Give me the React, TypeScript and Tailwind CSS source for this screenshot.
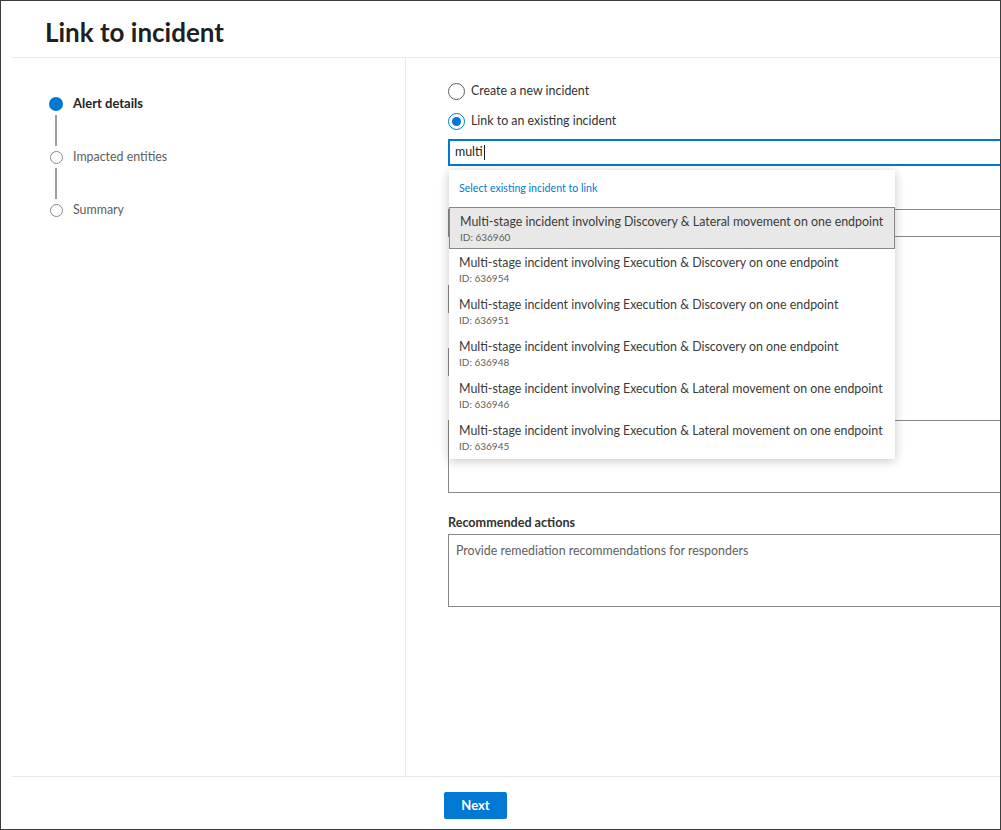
import React from 'react'

const incidents = [
  { title: 'Multi-stage incident involving Discovery & Lateral movement on one endpoint', id: '636960' },
  { title: 'Multi-stage incident involving Execution & Discovery on one endpoint', id: '636954' },
  { title: 'Multi-stage incident involving Execution & Discovery on one endpoint', id: '636951' },
  { title: 'Multi-stage incident involving Execution & Discovery on one endpoint', id: '636948' },
  { title: 'Multi-stage incident involving Execution & Lateral movement on one endpoint', id: '636946' },
  { title: 'Multi-stage incident involving Execution & Lateral movement on one endpoint', id: '636945' },
]

function Steps() {
  return (
    <div className="flex flex-col pl-[37px] pt-[36px]">
      {/* Alert details - current */}
      <div className="flex h-[20px] items-center gap-[10px]">
        <span className="h-[14px] w-[14px] rounded-full bg-[#0078d4]" />
        <span className="text-[13px] font-bold text-[#252423]">Alert details</span>
      </div>
      <div className="flex h-[33px] w-[14px] justify-center py-[1px]">
        <span className="w-[2px] bg-[#a19f9d]" />
      </div>
      <div className="flex h-[20px] items-center gap-[10px]">
        <span className="flex w-[14px] justify-center">
          <span className="h-[13px] w-[13px] rounded-full border-[1.5px] border-[#8a8886]" />
        </span>
        <span className="text-[12.4px] text-[#605e5c]">Impacted entities</span>
      </div>
      <div className="flex h-[33px] w-[14px] justify-center py-[1px]">
        <span className="w-[2px] bg-[#a19f9d]" />
      </div>
      <div className="flex h-[20px] items-center gap-[10px]">
        <span className="flex w-[14px] justify-center">
          <span className="h-[13px] w-[13px] rounded-full border-[1.5px] border-[#8a8886]" />
        </span>
        <span className="text-[12.4px] text-[#605e5c]">Summary</span>
      </div>
    </div>
  )
}

function Radio({ checked, label }: { checked?: boolean; label: string }) {
  return (
    <div className="flex h-[20px] items-center gap-[6px]">
      <span
        className={`flex h-[17px] w-[17px] items-center justify-center rounded-full border ${
          checked ? 'border-[#0078d4]' : 'border-[#605e5c]'
        }`}
      >
        {checked && <span className="h-[9px] w-[9px] rounded-full bg-[#0078d4]" />}
      </span>
      <span className="text-[12.4px] text-[#323130]">{label}</span>
    </div>
  )
}

function IncidentDropdown() {
  return (
    <div className="absolute left-[1px] top-[31px] z-10 w-[446px] bg-white shadow-[0_2px_10px_rgba(0,0,0,0.22)]">
      <div className="flex h-[37px] items-center pl-[10px] text-[10.6px] text-[#0078d4]">
        Select existing incident to link
      </div>
      {incidents.map((inc, i) => (
        <div
          key={inc.id}
          className={`h-[42px] whitespace-nowrap pl-[10px] pt-[6px] ${
            i === 0 ? 'border border-[#8a8886] bg-[#e8e8e8] pl-[9px] pt-[5px]' : ''
          }`}
        >
          <div className="text-[12.4px] leading-[16px] text-[#3b3a39]">{inc.title}</div>
          <div className="text-[10px] leading-[14px] text-[#605e5c]">ID: {inc.id}</div>
        </div>
      ))}
    </div>
  )
}

export default function App() {
  return (
    <div
      className="flex h-[830px] w-[1001px] flex-col overflow-hidden border border-[#3c3c3c] bg-white"
      style={{ fontFamily: '"Segoe UI", Lato, "Noto Sans", sans-serif' }}
    >
      {/* Header */}
      <div className="h-[56px] pl-[44px] pt-[15px]">
        <h1 className="text-[26px] font-bold leading-[32px] text-[#201f1e]">Link to incident</h1>
      </div>
      <div className="ml-[11px] h-px bg-[#e9e9e9]" />

      {/* Body */}
      <div className="ml-[11px] flex h-[718px]">
        <div className="w-[394px] shrink-0 border-r border-[#e9e9e9]">
          <Steps />
        </div>

        <div className="min-w-0 flex-1 overflow-hidden pl-[42px] pt-[23px]">
          <div className="flex flex-col gap-[10px]">
            <Radio label="Create a new incident" />
            <Radio checked label="Link to an existing incident" />
          </div>

          <div className="relative mt-[8px] w-[600px]">
            <div className="flex h-[27px] items-center border-2 border-[#0078d4] pl-[5px] text-[12.4px] text-[#201f1e]">
              multi
              <span className="ml-[1px] h-[15px] w-px bg-[#201f1e]" />
            </div>
            <IncidentDropdown />

            {/* Fields hidden under the suggestion list */}
            <div className="mt-[43px] h-[28px] border border-[#8a8886]" />
            <div className="mt-[48px] h-[28px] w-[300px] border border-[#8a8886]" />
            <div className="mt-[35px] h-[28px] w-[300px] border border-[#8a8886]" />
            <div className="mt-[44px] h-[73px] border border-[#8a8886]" />

            <div className="mt-[22px] h-[16px] text-[12.6px] font-bold leading-[16px] text-[#323130]">
              Recommended actions
            </div>
            <div className="mt-[3px] h-[73px] border border-[#8a8886] px-[7px] pt-[7px] text-[12.4px] text-[#605e5c]">
              Provide remediation recommendations for responders
            </div>
          </div>
        </div>
      </div>

      {/* Footer */}
      <div className="ml-[11px] flex flex-1 border-t border-[#e9e9e9] pl-[432px] pt-[15px]">
        <button
          type="button"
          className="h-[27px] w-[63px] rounded-[2px] bg-[#0078d4] text-[13px] font-bold text-white"
        >
          Next
        </button>
      </div>
    </div>
  )
}
